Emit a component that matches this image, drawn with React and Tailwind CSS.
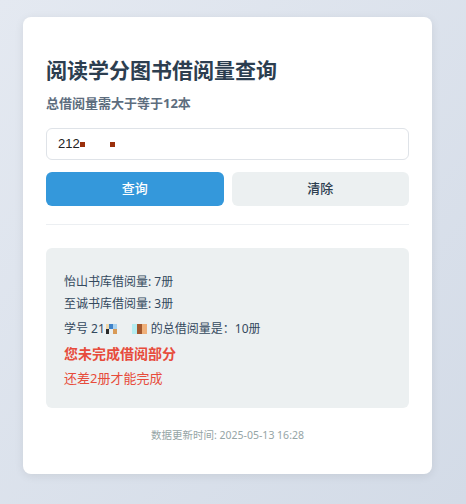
import React from "react";

const font = { fontFamily: '"Noto Sans", "Noto Sans CJK SC", sans-serif' };

function Px({ c, w = 4, h = 5 }) {
  return <span className="inline-block" style={{ width: w, height: h, background: c }} />;
}

export default function App() {
  return (
    <div
      className="w-[466px] h-[504px] overflow-hidden bg-gradient-to-br from-[#e4e9f1] to-[#d3dbe7] pt-[17px] pl-[23px]"
      style={font}
    >
      <div className="w-[409px] h-[457px] bg-white rounded-[8px] shadow-[0_2px_10px_rgba(0,0,0,0.08)] px-[23px] pt-[38px]">
        <h1 className="text-[21px] leading-[30px] font-bold text-[#2c3e50]">
          阅读学分图书借阅量查询
        </h1>
        <p className="mt-[8px] text-[13px] leading-[20px] font-bold text-[#5d6d7e]">
          总借阅量需大于等于12本
        </p>
        <div className="mt-[15px] h-[32px] border border-[#dfe3e8] rounded-[6px] flex items-center pl-[11px] text-[13px] text-[#222]">
          <span style={{ fontFamily: '"Liberation Sans", sans-serif' }}>212</span>
          <span className="inline-block w-[5px] h-[5px] bg-[#9a2f0c] mt-[1px]" />
          <span className="inline-block w-[5px] h-[5px] bg-[#9a2f0c] ml-[25px] mt-[1px]" />
        </div>
        <div className="mt-[12px] flex gap-[8px]">
          <button className="flex-1 h-[34px] rounded-[6px] bg-[#3498db] text-white text-[13px] font-medium">
            查询
          </button>
          <button className="flex-1 h-[34px] rounded-[6px] bg-[#ecf0f1] text-[#2c3e50] text-[13px] font-medium">
            清除
          </button>
        </div>
        <div className="mt-[18px] border-t border-[#eceff2]" />
        <div className="mt-[23px] h-[160px] rounded-[6px] bg-[#ecf0f1] px-[18px] pt-[23px] text-[12px] text-[#34495e]">
          <div className="leading-[22px]">怡山书库借阅量: 7册</div>
          <div className="leading-[22px]">至诚书库借阅量: 3册</div>
          <div className="leading-[24px] mt-[2px] flex items-center">
            <span>学号 21</span>
            <span className="inline-flex flex-col ml-[1px]">
              <span className="flex">
                <Px c="#f1d8a8" w={3} h={5} />
                <Px c="#3e82c9" />
                <Px c="#a9d2ef" />
              </span>
              <span className="flex">
                <Px c="#2a2a2a" w={3} h={5} />
                <Px c="#e9eef0" />
                <Px c="#d89a57" />
              </span>
            </span>
            <span className="inline-flex ml-[15px]">
              <Px c="#b5ecef" w={5} h={10} />
              <Px c="#a4582e" w={5} h={10} />
              <Px c="#efb07a" w={5} h={10} />
            </span>
            <span className="ml-[4px]">的总借阅量是：10册</span>
          </div>
          <div className="leading-[25px] text-[14px] font-bold text-[#e74c3c]">您未完成借阅部分</div>
          <div className="leading-[25px] text-[13px] text-[#e74c3c]">还差2册才能完成</div>
        </div>
        <div className="mt-[19px] text-center text-[10.5px] leading-[16px] text-[#95a5a6]">
          数据更新时间: 2025-05-13 16:28
        </div>
      </div>
    </div>
  );
}
